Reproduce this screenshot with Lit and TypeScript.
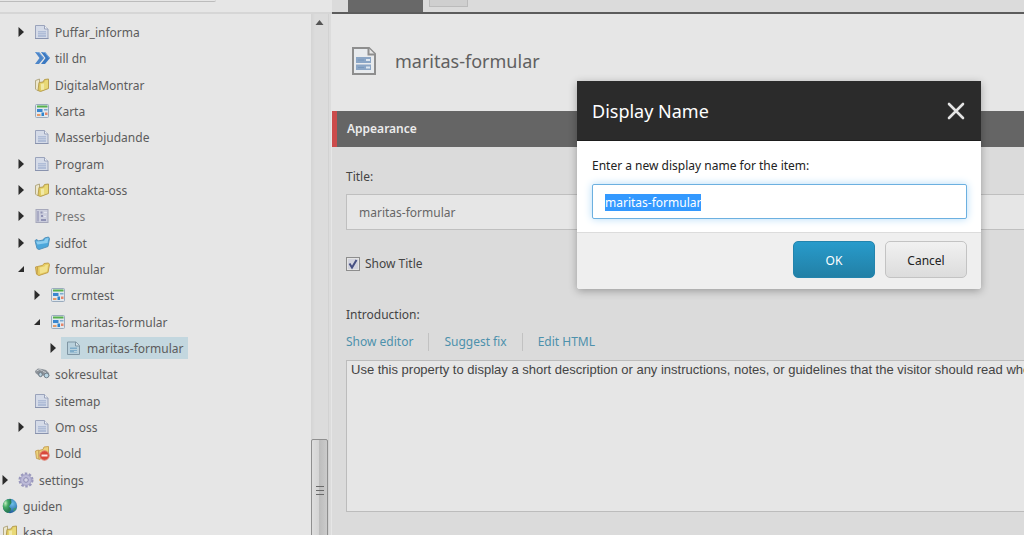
import { LitElement, html, svg, css, nothing, TemplateResult } from "lit";
import { customElement, property, query } from "lit/decorators.js";
import { classMap } from "lit/directives/class-map.js";

type IconName =
  | "page" | "link" | "folders" | "grid" | "list" | "blueFolder"
  | "folder" | "form" | "search" | "blocked" | "gear" | "globe";

interface TreeNode {
  label: string;
  icon: IconName;
  level: number;
  state?: "open" | "closed";
  selected?: boolean;
  muted?: boolean;
}

const NODES: TreeNode[] = [
  { label: "Puffar_informa", icon: "page", level: 2, state: "closed" },
  { label: "till dn", icon: "link", level: 2 },
  { label: "DigitalaMontrar", icon: "folders", level: 2 },
  { label: "Karta", icon: "grid", level: 2 },
  { label: "Masserbjudande", icon: "page", level: 2 },
  { label: "Program", icon: "page", level: 2, state: "closed" },
  { label: "kontakta-oss", icon: "folders", level: 2, state: "closed" },
  { label: "Press", icon: "list", level: 2, state: "closed", muted: true },
  { label: "sidfot", icon: "blueFolder", level: 2, state: "closed" },
  { label: "formular", icon: "folder", level: 2, state: "open" },
  { label: "crmtest", icon: "grid", level: 3, state: "closed" },
  { label: "maritas-formular", icon: "grid", level: 3, state: "open" },
  { label: "maritas-formular", icon: "form", level: 4, state: "closed", selected: true },
  { label: "sokresultat", icon: "search", level: 2 },
  { label: "sitemap", icon: "page", level: 2 },
  { label: "Om oss", icon: "page", level: 2, state: "closed" },
  { label: "Dold", icon: "blocked", level: 2 },
  { label: "settings", icon: "gear", level: 1, state: "closed" },
  { label: "guiden", icon: "globe", level: 0 },
  { label: "kasta", icon: "folders", level: 0 },
];

const ICONS: Record<IconName, TemplateResult<2>> = {
  page: svg`
    <path d="M1.500 1.500h9l3.500 3.500v9.500H1.500z" fill="#d5dbe8" stroke="#9aa3bb"/>
    <path d="M10.500 1.500v3.500H14" fill="#eef1f6" stroke="#9aa3bb"/>
    <path d="M4 7h8v6H4z" fill="#b0bdd7"/>
    <path d="M4 8.500h8M4 10.500h8" stroke="#c2cce0"/>
    <path d="M1 14.500h13.500" stroke="#8993ae"/>`,
  form: svg`
    <path d="M1.500 2h8.500l3.500 3.500v9H1.500z" fill="#b8d0dc" stroke="#7f95a3"/>
    <path d="M9.500 2v4h4" fill="#d5e2e8" stroke="#7f95a3"/>
    <path d="M4 7.500h7v5H4z" fill="#7facc9"/>
    <path d="M4 9.500h7M8 11.500h3" stroke="#b8d0dc"/>`,
  link: svg`
    <path d="M1 2h4l5 6-5 6H1l4.500-6z" fill="#4d86c9"/>
    <path d="M7 2h4l5 6-5 6H7l4.500-6z" fill="#3b79c2"/>
    <path d="M2.500 2.500H5L9.500 8M8.500 2.500H11L15.300 8" fill="none" stroke="#77a7dc"/>`,
  folders: svg`
    <path d="M1.500 3.500l4-1.500v11l-2.500.5-1.500-1.500z" fill="#ece7cd" stroke="#b3a983"/>
    <path d="M5 5.500l4-.5 1.500-2.500 4-.5v9.500L6.500 14.500 4 13.500z" fill="#ddc75f" stroke="#b8a052"/>
    <path d="M6 6.500l4-.5 1.500-2.700 2.500-.3v8L7 13.500z" fill="#e9d977"/>
    <path d="M7 7l3-.5v6L7 13z" fill="#f1e9a8"/>`,
  folder: svg`
    <path d="M1.500 6l2-.500v8L2.500 13z" fill="#e8c860" stroke="#c09d4c"/>
    <path d="M3.500 5.500l5-1 1.500-2 4.500-.5 1 1.500-1.500 8L5 14.500l-2-1z" fill="#e6cc62" stroke="#c4a04a"/>
    <path d="M5.500 6.500l5-1 1-1.500 2.500-.200-1 6.700L6 12.800z" fill="#f2e18c"/>`,
  blueFolder: svg`
    <path d="M1 5.500l2-1 1 1.500 5-1 1.500-2 4-1 1 1.500-1.500 8L5 14.500l-2-1z" fill="#4ca7db" stroke="#5492bb"/>
    <path d="M2 6.500l8-.500 1.500-2.500 3-.500-1 5-10 1.500z" fill="#8ccdef"/>`,
  grid: svg`
    <rect x="1.500" y="1.500" width="13" height="13" rx="1" fill="#e0e7ed" stroke="#9aabbd"/>
    <path d="M3 2.500h10.500v2H3z" fill="#57b04c"/>
    <path d="M3 6h5.500v3H3z" fill="#3a86cf"/>
    <path d="M10 6h3.500v1.500H10z" fill="#7cabd2"/>
    <path d="M3 11h3.500v2H3z" fill="#e59a68"/>
    <path d="M7.500 9.500H10V13H7.500z" fill="#2f84cc"/>
    <path d="M11 9.500h2.500V12H11z" fill="#e6866a"/>`,
  list: svg`
    <rect x="2" y="1.500" width="12" height="13" fill="#cccedd" stroke="#a6a8bb"/>
    <path d="M4 3v10.500" stroke="#a9abc4" stroke-width="2"/>
    <path d="M6.500 4.500h2M7 8h2M7 12h5" stroke="#9092b4" stroke-width="2"/>
    <path d="M10 4.500h3M10 8.500h2" stroke="#e3e4ee"/>`,
  search: svg`
    <path d="M1 5l3-2.500 4 .5 4 1 3 3 .5 3-2 1.500-3-.5-1.500-2-2 1.500-3-1.500L1.500 7z" fill="#8a9097"/>
    <path d="M2.500 5l3-1.500 3 1M9 5.500l3 1" fill="none" stroke="#c9ced2"/>
    <ellipse cx="6.500" cy="8.500" rx="1.800" ry="2.200" fill="#b9d0dd" stroke="#6b7782"/>
    <ellipse cx="12.500" cy="9.500" rx="2.300" ry="2.300" fill="#b9d5e3" stroke="#74828d"/>`,
  blocked: svg`
    <path d="M1.500 6l3-1 .5 9-2.500-.5z" fill="#ecd27a" stroke="#c9a35a"/>
    <path d="M5 5.500l4-1 1-2.500 4.500-.5v9L5 14.500z" fill="#ecd27a" stroke="#c9a35a"/>
    <circle cx="10.500" cy="10.500" r="4.700" fill="#d9493b" stroke="#e07f70"/>
    <path d="M7.500 10.500h6" stroke="#fbe9e6" stroke-width="2"/>`,
  gear: svg`
    <circle cx="8" cy="8" r="6.200" fill="none" stroke="#9a98bd" stroke-width="2.600" stroke-dasharray="2.400 1.500"/>
    <circle cx="8" cy="8" r="5.400" fill="#bcbad8" stroke="#a3a1c5"/>
    <circle cx="8" cy="8" r="2.300" fill="#d6d5e5" stroke="#8f8db3"/>`,
  globe: svg`
    <defs>
      <radialGradient id="land" cx=".3" cy=".3" r=".6">
        <stop offset="0" stop-color="#c4ecc0"/>
        <stop offset=".5" stop-color="#45ab66"/>
        <stop offset="1" stop-color="#2b8056"/>
      </radialGradient>
      <radialGradient id="sea" cx=".65" cy=".35" r=".6">
        <stop offset="0" stop-color="#6cc0ea"/>
        <stop offset="1" stop-color="#235f9c"/>
      </radialGradient>
    </defs>
    <circle cx="8" cy="8" r="7.200" fill="url(#sea)"/>
    <path d="M9 1C4 .5.800 4 .800 8s2.500 6.500 5.200 7c2-1 3.500-3 3-4.500L7 8.500 9.500 5z" fill="url(#land)"/>
    <path d="M11.500 10.500l3-1c-.5 2-1.500 3.200-3 4z" fill="#3c9a70"/>`,
};

@customElement("content-tree")
class ContentTree extends LitElement {
  @property({ attribute: false }) nodes: TreeNode[] = [];

  static styles = css`
    :host { display: block; flex: 1; min-width: 0; overflow: hidden; }
    .tree { list-style: none; margin: 0; padding: 5px 0 0; margin-left: -14px; }
    .row { display: flex; align-items: center; height: 26px; white-space: nowrap; }
    .row:nth-child(3n) { height: 27px; }
    .level-1 { padding-left: 16px; }
    .level-2 { padding-left: 32px; }
    .level-3 { padding-left: 48px; }
    .level-4 { padding-left: 64px; }
    .arrow { flex: none; width: 16px; height: 16px; fill: #2c2c2c; }
    .item { display: flex; align-items: center; gap: 5px; height: 22px; color: #5c5c5c; text-decoration: none; }
    .muted { color: #787878; }
    .selected { background: #c3d7df; margin: 0 -5px; padding: 0 5px; }
    .icon { width: 16px; height: 16px; fill: none; }
    .label { padding-top: 2px; }
  `;

  render() {
    return html`<ul class="tree" role="tree">
      ${this.nodes.map((n) => html`
        <li class="row level-${n.level}" role="treeitem" aria-level=${n.level + 1}
            aria-selected=${n.selected ? "true" : "false"}
            aria-expanded=${n.state ? String(n.state === "open") : nothing}>
          <svg class="arrow" viewBox="0 0 16 16" aria-hidden="true">
            ${n.state === "closed" ? svg`<path d="M.5 3L6 8 .5 13z"/>` : nothing}
            ${n.state === "open" ? svg`<path d="M6 5v6H0z"/>` : nothing}
          </svg>
          <a href="#" class=${classMap({ item: true, selected: !!n.selected, muted: !!n.muted })}>
            <svg class="icon" viewBox="0 0 16 16" aria-hidden="true">${ICONS[n.icon]}</svg>
            <span class="label">${n.label}</span>
          </a>
        </li>`)}
    </ul>`;
  }
}

@customElement("rename-dialog")
class RenameDialog extends LitElement {
  @property() value = "";
  @query(".field") field!: HTMLInputElement;

  static styles = css`
    :host {
      display: block; width: 404px; color: #222; background: #fff;
      border-radius: 0 0 3px 3px; overflow: hidden;
      box-shadow: 0 2px 8px rgba(0, 0, 0, 0.3);
    }
    .head {
      display: flex; align-items: center; justify-content: space-between;
      box-sizing: border-box; height: 60px; padding: 0 15px;
      background: #2b2b2b; border-bottom: 1px solid #1d1d1d;
    }
    .title { margin: 0; font-size: 18px; line-height: 24px; font-weight: 400; color: #fff; }
    .close { display: flex; padding: 0; border: 0; background: none; }
    .cross { width: 20px; height: 20px; stroke: #e4e4e4; stroke-width: 2.600; stroke-linecap: round; }
    .body { display: grid; gap: 9px; padding: 16px 14px 13px 15px; }
    .field {
      box-sizing: border-box; width: 100%; height: 35px; padding: 1px 12px 0;
      font: inherit; line-height: 17px; color: #222; background: #fff;
      border: 1px solid #6cb0e0; border-radius: 2px; outline: 0;
      box-shadow: 0 0 8px #b4dcf8;
    }
    .field::selection { background: #3399ff; color: #fff; }
    .foot {
      display: flex; justify-content: flex-end; gap: 10px;
      padding: 8px 14px 11px; background: #efefef; border-top: 1px solid #dcdcdc;
    }
    .button {
      box-sizing: border-box; width: 82px; height: 37px; padding: 2px 0 0;
      font: inherit; border-radius: 5px;
    }
    .ok { color: #fff; background: linear-gradient(#289bcb, #2280a6); border: 1px solid #2384ad; }
    .cancel { color: #222; background: linear-gradient(#f1f1f1, #dcdcdc); border: 1px solid #c3c3c3; }
  `;

  firstUpdated() {
    this.field.focus();
    this.field.select();
  }

  render() {
    return html`
      <header class="head">
        <h2 class="title">Display Name</h2>
        <button class="close" type="button" aria-label="Close">
          <svg class="cross" viewBox="0 0 20 20"><path d="M3 3l14 14M17 3L3 17"/></svg>
        </button>
      </header>
      <div class="body">
        <label for="name">Enter a new display name for the item:</label>
        <input class="field" id="name" type="text" .value=${this.value} />
      </div>
      <footer class="foot">
        <button class="button ok" type="button">OK</button>
        <button class="button cancel" type="button">Cancel</button>
      </footer>`;
  }
}

@customElement("app-root")
class AppRoot extends LitElement {
  static styles = css`
    :host {
      position: relative; display: flex; height: 100vh; overflow: hidden;
      background: #dbdbdb; color: #444;
      font: 12px/18px "Noto Sans", "Open Sans", sans-serif;
    }
    .sidebar { display: flex; flex-direction: column; flex: none; width: 332px; background: #e6e6e6; }
    .search-bar { box-sizing: border-box; flex: none; height: 14px; border-bottom: 2px solid #d6d6d6; }
    .search-edge { width: 216px; height: 1px; border-bottom: 1px solid #bcbcbc; border-radius: 0 0 2px 0; }
    .tree-area { display: flex; flex: 1; min-height: 0; }
    .scrollbar {
      display: flex; flex-direction: column; justify-content: space-between;
      flex: none; width: 17px; background: linear-gradient(90deg, #d4d4d4, #dcdcdc 4px);
    }
    .up { width: 17px; height: 18px; }
    .thumb {
      box-sizing: border-box; display: grid; place-items: center; flex: none;
      width: 17px; height: 102px; margin-bottom: -6px;
      border: 1px solid #8f8f8f; border-radius: 2px;
      background: linear-gradient(90deg, #dedede, #d4d4d4 45%, #bdbdbd 50%, #cbcbcb);
    }
    .grip { width: 8px; height: 9px; stroke: #6a6a6a; }
    .splitter { flex: none; width: 2px; background: #dcdcdc; border-left: 1px solid #d2d2d2; border-right: 1px solid #e6e6e6; }

    .main { display: flex; flex-direction: column; flex: 1; min-width: 0; }
    .tabs { box-sizing: border-box; display: flex; gap: 6px; flex: none; height: 14px; padding-left: 16px; border-bottom: 2px solid #5c5c5c; }
    .tab-active { width: 75px; height: 12px; background: #686868; }
    .tab { box-sizing: border-box; width: 39px; height: 7px; background: #cfcfcf; border: 1px solid #bbb; border-top: 0; }
    .header { display: flex; align-items: center; gap: 16px; box-sizing: border-box; flex: none; height: 97px; padding: 0 17px 3px; background: #e6e6e6; }
    .doc-icon { width: 30px; height: 30px; fill: none; }
    .heading { margin: 0; font-size: 18px; line-height: 24px; font-weight: 400; color: #606060; }
    .section {
      box-sizing: border-box; flex: none; height: 36px; margin: 0; padding: 9px 10px;
      font-size: 12px; line-height: 18px; font-weight: 600; color: #ececec;
      background: #656565; border-left: 5px solid #cb4b4b;
    }
    .form { display: flex; flex-direction: column; padding: 21px 0 0 14px; }
    .text {
      box-sizing: border-box; width: 100%; height: 36px; margin: 8px 0 25px; padding: 0 0 0 12px;
      font: inherit; color: #666; background: #e6e6e6;
      border: 1px solid #bfbfbf; border-right: 0; border-radius: 0;
    }
    .check-row { display: flex; align-items: center; gap: 5px; margin-bottom: 33px; }
    .check { display: grid; width: 14px; height: 14px; }
    .box {
      appearance: none; grid-area: 1 / 1; width: 14px; height: 14px; margin: 0;
      background: #d3d4de; border: 1px solid #8d8d8d; box-shadow: inset 0 0 0 1px #e4e4e4;
    }
    .tick { grid-area: 1 / 1; z-index: 1; pointer-events: none; width: 14px; height: 14px; fill: none; stroke: #465083; stroke-width: 2; }
    .tools { display: flex; margin: 9px 0; }
    .tool { padding-right: 15px; color: #4d91ac; text-decoration: none; }
    .tool + .tool { padding-left: 15px; border-left: 1px solid #c2c2c2; }
    .intro {
      box-sizing: border-box; width: 100%; height: 152px; padding: 0 0 0 4px;
      font: 13px/17px "Liberation Sans", Arial, sans-serif; color: #444;
      white-space: pre; overflow: hidden; resize: none;
      background: #e6e6e6; border: 1px solid #bcbcbc; border-right: 0; border-radius: 0;
    }
    .dialog { position: absolute; top: 81px; right: 43px; }
  `;

  render() {
    return html`
      <nav class="sidebar" aria-label="Content tree">
        <div class="search-bar"><div class="search-edge"></div></div>
        <div class="tree-area">
          <content-tree .nodes=${NODES}></content-tree>
          <div class="scrollbar" aria-hidden="true">
            <svg class="up" viewBox="0 0 17 18"><path d="M8.500 6l4 5h-8z" fill="#555"/></svg>
            <div class="thumb">
              <svg class="grip" viewBox="0 0 8 9"><path d="M0 .5h8M0 4.500h8M0 8.500h8"/></svg>
            </div>
          </div>
          <div class="splitter"></div>
        </div>
      </nav>
      <main class="main">
        <div class="tabs"><div class="tab-active"></div><div class="tab"></div></div>
        <header class="header">
          <svg class="doc-icon" viewBox="0 0 30 30" aria-hidden="true">
            <path d="M4 2h16l6 6v20H4z" fill="#e8ebee" stroke="#8e8e8e" stroke-width="2"/>
            <path d="M19.500 2v6.500H26" fill="#e6e6e6" stroke="#8e8e8e" stroke-width="2"/>
            <path d="M7 11h15v6H7zM7 18.500h15v5.500H7z" fill="#8ba6c6"/>
            <path d="M17 13h4v2h-4zM17 20.500h4v2h-4z" fill="#dce6f0"/>
            <path d="M9 14h6M9 21.500h6" stroke="#7898bd"/>
          </svg>
          <h1 class="heading">maritas-formular</h1>
        </header>
        <h2 class="section">Appearance</h2>
        <form class="form">
          <label for="title">Title:</label>
          <input class="text" id="title" type="text" .value=${"maritas-formular"} />
          <div class="check-row">
            <span class="check">
              <input class="box" id="show-title" type="checkbox" checked />
              <svg class="tick" viewBox="0 0 14 14" aria-hidden="true"><path d="M3.500 6.500l2.500 4 4.500-7.500"/></svg>
            </span>
            <label for="show-title">Show Title</label>
          </div>
          <label for="intro">Introduction:</label>
          <div class="tools">
            <a class="tool" href="#">Show editor</a>
            <a class="tool" href="#">Suggest fix</a>
            <a class="tool" href="#">Edit HTML</a>
          </div>
          <textarea class="intro" id="intro" wrap="off" .value=${"Use this property to display a short description or any instructions, notes, or guidelines that the visitor should read when"}></textarea>
        </form>
      </main>
      <rename-dialog class="dialog" role="dialog" aria-label="Display Name" .value=${"maritas-formular"}></rename-dialog>`;
  }
}
